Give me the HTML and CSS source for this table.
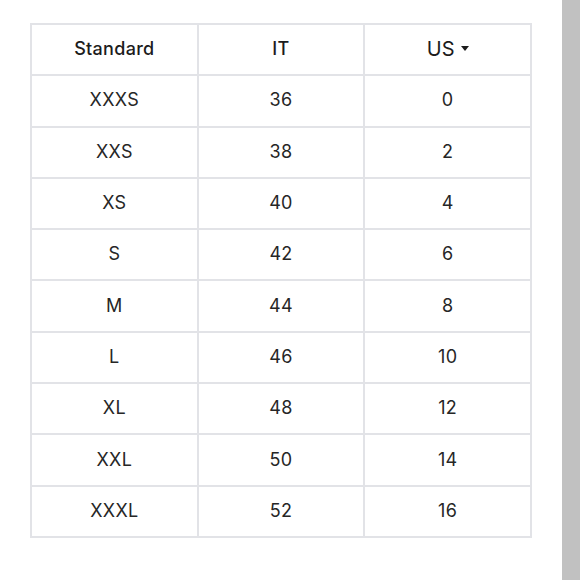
FILE: index.html
```html
<!DOCTYPE html>
<html>
<head>
<meta charset="utf-8">
<link rel="stylesheet" href="styles.css">
</head>
<body>
<div class="page">
  <main class="content">
    <div class="size-grid">
      <div class="cell head">Standard</div>
      <div class="cell head">IT</div>
      <div class="cell head sel">US<span class="caret"></span></div>
      <div class="cell">XXXS</div><div class="cell">36</div><div class="cell">0</div>
      <div class="cell">XXS</div><div class="cell">38</div><div class="cell">2</div>
      <div class="cell">XS</div><div class="cell">40</div><div class="cell">4</div>
      <div class="cell">S</div><div class="cell">42</div><div class="cell">6</div>
      <div class="cell">M</div><div class="cell">44</div><div class="cell">8</div>
      <div class="cell">L</div><div class="cell">46</div><div class="cell">10</div>
      <div class="cell">XL</div><div class="cell">48</div><div class="cell">12</div>
      <div class="cell">XXL</div><div class="cell">50</div><div class="cell">14</div>
      <div class="cell">XXXL</div><div class="cell">52</div><div class="cell">16</div>
    </div>
  </main>
  <div class="scroll-strip"></div>
</div>
</body>
</html>
```

FILE: styles.css
```css
html, body {
  margin: 0;
  padding: 0;
  background: #ffffff;
}
.page {
  display: flex;
  width: 580px;
  height: 580px;
  overflow: hidden;
}
.content {
  flex: 1;
  padding: 23px 0 0 30px;
}
.scroll-strip {
  width: 18px;
  height: 580px;
  background: #c1c1c1;
}
.size-grid {
  width: 502px;
  box-sizing: border-box;
  display: grid;
  grid-template-columns: repeat(3, 1fr);
  grid-auto-rows: 49.3px;
  gap: 2px;
  padding: 2px;
  background: #e2e3e7;
  font-family: Inter, "Noto Sans", sans-serif;
  font-size: 18px;
  letter-spacing: 0.3px;
  color: #262626;
}
.cell {
  background: #ffffff;
  display: flex;
  align-items: center;
  justify-content: center;
  padding-bottom: 2px;
  box-sizing: border-box;
}
.head {
  font-weight: 500;
  color: #1c1c1c;
}
.sel {
  font-size: 20px;
  font-weight: 400;
  letter-spacing: 0;
}
.caret {
  display: inline-block;
  width: 0;
  height: 0;
  margin-left: 6px;
  border-left: 4.5px solid transparent;
  border-right: 4.5px solid transparent;
  border-top: 5px solid #1c1c1c;
}
```
